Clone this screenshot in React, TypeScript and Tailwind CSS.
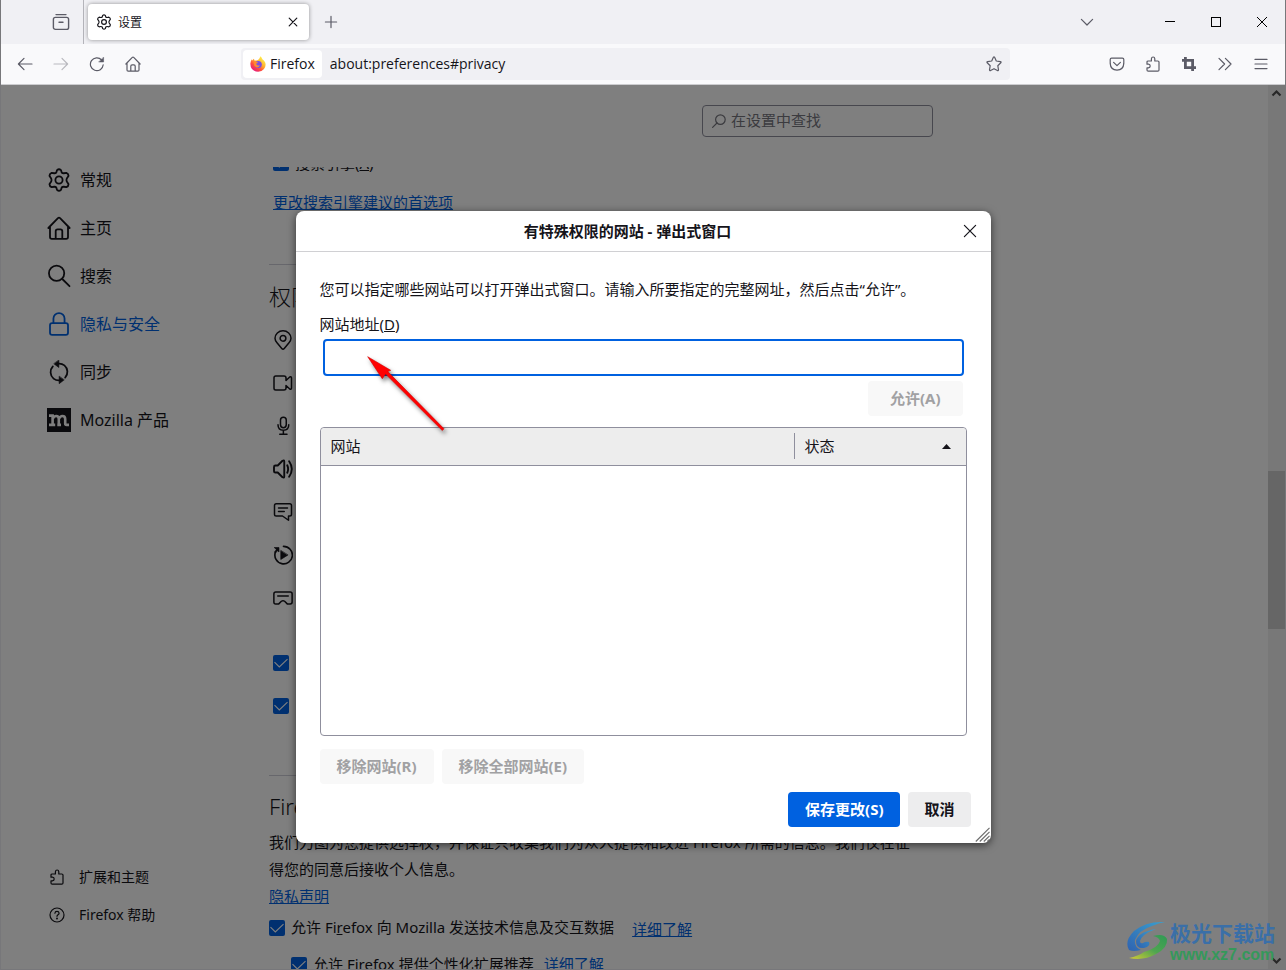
import React from "react";

type IconProps = { className?: string };

const stroke = {
  fill: "none",
  stroke: "currentColor",
  strokeWidth: 1.2,
  strokeLinecap: "round" as const,
  strokeLinejoin: "round" as const,
};

function Svg({ className = "size-4", children }: IconProps & { children: React.ReactNode }) {
  return (
    <svg viewBox="0 0 16 16" className={`${className} shrink-0`} aria-hidden="true" {...stroke}>
      {children}
    </svg>
  );
}

const GearIcon = (p: IconProps) => (
  <Svg {...p}>
    <circle cx="8" cy="8" r="2.4" />
    <path d="M6.7 1.4Q8 .2 9.3 1.4L9.8 3Q10.4 3.6 11.2 3.5L12.9 3.2Q14.5 3.8 14.3 5.4L13.2 7Q12.8 8 13.2 9L14.3 10.6Q14.5 12.2 12.9 12.8L11.2 12.5Q10.4 12.4 9.8 13L9.3 14.6Q8 15.8 6.7 14.6L6.2 13Q5.6 12.4 4.8 12.5L3.1 12.8Q1.5 12.2 1.7 10.6L2.8 9Q3.2 8 2.8 7L1.7 5.4Q1.5 3.8 3.1 3.2L4.8 3.5Q5.6 3.6 6.2 3Z" />
  </Svg>
);
const HomeIcon = (p: IconProps) => (
  <Svg {...p}>
    <path d="M.9 8 7.3 1.4Q8 .8 8.7 1.4L15.1 8M2 7.2V14Q2 15.2 3.2 15.2H12.8Q14 15.2 14 14V7.2M5.8 15V10.2Q5.8 8.9 7.1 8.9H8.9Q10.2 8.9 10.2 10.2V15" />
  </Svg>
);
const SearchIcon = (p: IconProps) => (
  <Svg {...p}>
    <circle cx="6.4" cy="6.2" r="5.1" />
    <path d="M10.2 10 15 14.8" />
  </Svg>
);
const LockIcon = (p: IconProps) => (
  <Svg {...p}>
    <rect x="2" y="7.4" width="12" height="7.8" rx="1.4" />
    <path d="M4.3 7.3V4.4a3.7 3.7 0 0 1 7.4 0V7.3" />
  </Svg>
);
const SyncIcon = (p: IconProps) => (
  <Svg {...p}>
    <path d="M4.4 12.4A5.6 5.6 0 0 1 3.9 4.3M7.4 2.5A5.6 5.6 0 0 1 11.6 3.6M11.6 3.6A5.6 5.6 0 0 1 12.1 11.7M8.6 13.5A5.6 5.6 0 0 1 4.4 12.4" />
    <path d="M7.9.2V5L4.7 2.6ZM8.1 11V15.8L11.3 13.4Z" fill="currentColor" strokeWidth=".4" />
  </Svg>
);
const PuzzleIcon = (p: IconProps) => (
  <Svg {...p}>
    <path d="M3.2 15.2Q2 15.2 2 14V11.8H3.4Q5.2 11.6 5.2 10T3.4 8.2H2V6.1Q2 5 3.2 5H6.4V2.8Q6.6 1 8.1 1T9.8 2.8V5H12.8Q14 5 14 6.1V14Q14 15.2 12.8 15.2Z" />
  </Svg>
);
const HelpIcon = (p: IconProps) => (
  <Svg {...p}>
    <circle cx="8" cy="8" r="7" />
    <path d="M5.9 6.2Q6.1 4.3 8 4.3T10.1 6.2Q10.1 7.2 8.8 7.9 8 8.4 8 9.3" />
    <circle cx="8" cy="11.6" r=".4" fill="currentColor" />
  </Svg>
);
const PinIcon = (p: IconProps) => (
  <Svg {...p}>
    <circle cx="8" cy="6.6" r="2.3" />
    <path d="M8 15.4Q7.5 15.4 7 14.8L3.2 10.2Q1.6 8.4 1.6 6.6A6.4 6 0 0 1 14.4 6.6Q14.4 8.4 12.8 10.2L9 14.8Q8.5 15.4 8 15.4Z" />
  </Svg>
);
const CameraIcon = (p: IconProps) => (
  <Svg {...p}>
    <path d="M2.2 2.4H8.8Q10.4 2.4 10.4 4V6L13.4 3.2Q14.8 2.6 14.8 4V12Q14.8 13.4 13.4 12.8L10.4 10V12Q10.4 13.6 8.8 13.6H2.2Q.8 13.6.8 12.2V3.8Q.8 2.4 2.2 2.4Z" />
  </Svg>
);
const MicIcon = (p: IconProps) => (
  <Svg {...p}>
    <rect x="6" y=".9" width="4.6" height="8.4" rx="2.3" />
    <path d="M4 7Q4 11.4 8.3 11.4T12.6 7M8.3 11.6V14.6M5.4 14.6H11.2" />
  </Svg>
);
const SpeakerIcon = (p: IconProps) => (
  <Svg {...p}>
    <path d="M.8 6.3Q.8 5.2 1.9 5.2H3.8L7.6 1.4Q9 .6 9 2V14Q9 15.4 7.6 14.6L3.8 10.8H1.9Q.8 10.8.8 9.7ZM11.4 5Q12.8 8 11.4 11M12.9 1.8Q17.2 8 12.9 14.2" strokeWidth="1.5" />
  </Svg>
);
const BubbleIcon = (p: IconProps) => (
  <Svg {...p}>
    <path d="M2.6 1.4H13.4Q14.8 1.4 14.8 2.8V9.8Q14.8 11.2 13.4 11.2H12.4V14.6L7.6 11.2H2.6Q1.2 11.2 1.2 9.8V2.8Q1.2 1.4 2.6 1.4ZM4.4 4.8H11.6M4.4 7.6H9" />
  </Svg>
);
const AutoplayIcon = (p: IconProps) => (
  <Svg {...p}>
    <path d="M8.4 1.1A7 7 0 1 1 1.9 5.8" strokeWidth="1.3" />
    <path d="M6.2 4.6V11.6L11.8 8.1ZM1.2 2H4.8V5.6L3.6 4.6 2 6.4 1.2 5.6 2.6 3.8Z" fill="currentColor" strokeWidth=".5" />
  </Svg>
);
const HeadsetIcon = (p: IconProps) => (
  <Svg {...p}>
    <path d="M2.2 3.2H13.8Q15.3 3.2 15.3 4.7V11.2Q15.3 12.7 13.8 12.7H11.4L9.3 10.6Q8 9.7 6.7 10.6L4.6 12.7H2.2Q.7 12.7.7 11.2V4.7Q.7 3.2 2.2 3.2ZM3.8 6.3H12.2" />
  </Svg>
);

function MozillaIcon() {
  return (
    <svg viewBox="0 0 24 24" className="size-6 shrink-0" aria-hidden="true">
      <rect width="24" height="24" fill="#15141a" />
      <path
        d="M2 7.600H5.600V16.900M2 16.900H8.200M5.600 10.800Q7 8 9.200 8 11.800 8 11.800 11V16.900M10.300 16.900H14M11.800 10.800Q13.200 8 15.400 8 18.200 8 18.200 11V15.600Q18.200 16.900 19.500 16.900H22"
        fill="none"
        stroke="#fff"
        strokeWidth="2.6"
      />
    </svg>
  );
}

function FirefoxLogo() {
  return (
    <svg viewBox="0 0 16 16" className="size-4 shrink-0" aria-hidden="true">
      <defs>
        <linearGradient id="fx-body" x1=".85" y1=".1" x2=".2" y2=".95">
          <stop offset="0" stopColor="#fff44f" />
          <stop offset=".4" stopColor="#ffb02e" />
          <stop offset=".68" stopColor="#ff4f3d" />
          <stop offset="1" stopColor="#e31587" />
        </linearGradient>
      </defs>
      <path d="M10.3.2Q11.8 1.2 12.4 3.2 14.4 4.4 15.3 6.8 16.3 10.2 14 13 11.8 15.7 8.2 15.8 4.3 15.8 2 13 .1 10.6.4 7.2.7 4.8 1.9 3.2L2.3 4.6Q3 3.4 4 2.7L4.4 4.4 6.4 4.6Q8.2 4.2 9 3 9.8 1.7 10.3.2Z" fill="url(#fx-body)" />
      <circle cx="8.3" cy="8.4" r="3.5" fill="#7b4fe0" />
      <path d="M3.6 6.4Q5.8 5 8 6.4 7.4 7.4 6.2 7.6 6.2 9 7.8 9.4 9 9.6 9.8 8.8 9.4 11.4 7 11.4 4 11 3.6 6.4Z" fill="#ff8a2f" />
    </svg>
  );
}

const categories = [
  { label: "常规", icon: <GearIcon className="size-6" /> },
  { label: "主页", icon: <HomeIcon className="size-6" /> },
  { label: "搜索", icon: <SearchIcon className="size-6" /> },
  { label: "隐私与安全", icon: <LockIcon className="size-6" />, active: true },
  { label: "同步", icon: <SyncIcon className="size-6" /> },
  { label: "Mozilla 产品", icon: <MozillaIcon /> },
];

const permissionIcons = [PinIcon, CameraIcon, MicIcon, SpeakerIcon, BubbleIcon, AutoplayIcon, HeadsetIcon];

function Checkbox({ id, label }: { id: string; label?: string }) {
  return (
    <span className="relative flex size-4 shrink-0">
      <input
        id={id}
        type="checkbox"
        defaultChecked
        aria-label={label}
        className="size-4 appearance-none rounded-xs bg-[#0061e0]"
      />
      <svg viewBox="0 0 16 16" className="pointer-events-none absolute inset-0 size-4" aria-hidden="true">
        <path d="M1.5 7.2 6.3 12 14.5 4.2" fill="none" stroke="#fff" strokeWidth="1.1" />
      </svg>
    </span>
  );
}

function TabStrip() {
  return (
    <div className="flex h-11 shrink-0 items-center bg-[#f0f0f4] text-[#5b5b66]">
      <div className="flex h-full w-[83px] items-center justify-end border-r border-[#b4b4ba] pr-3">
        <button aria-label="查看" className="flex size-5 items-center justify-center">
          <svg viewBox="0 0 18 18" className="size-[18px]" aria-hidden="true" {...stroke} strokeWidth="1.4">
            <path d="M4 1.6H14" />
            <rect x="1.4" y="4.4" width="15.2" height="12" rx="2" />
            <path d="M7 9.2H11" />
          </svg>
        </button>
      </div>
      <div className="ml-1 flex h-9 w-[221px] items-center rounded bg-white px-2 text-xs text-[#15141a] shadow-[0_0_4px_rgba(0,0,0,0.4)]">
        <GearIcon />
        <span className="ml-1.5 flex-1 pt-0.5">设置</span>
        <button aria-label="关闭标签页" className="flex size-4 items-center justify-center">
          <svg viewBox="0 0 16 16" className="size-4" aria-hidden="true" {...stroke}>
            <path d="M4.2 4.2 11.8 11.8M11.8 4.2 4.2 11.8" />
          </svg>
        </button>
      </div>
      <button aria-label="新标签页" className="ml-3 flex size-5 items-center justify-center">
        <svg viewBox="0 0 16 16" className="size-4" aria-hidden="true" {...stroke}>
          <path d="M8 2.4V13.6M2.4 8H13.6" />
        </svg>
      </button>
      <div className="flex-1" />
      <button aria-label="列出标签页" className="flex w-[60px] justify-center">
        <svg viewBox="0 0 16 16" className="size-4" aria-hidden="true" {...stroke}>
          <path d="M2.4 5.4 8 11 13.6 5.4" />
        </svg>
      </button>
      <div className="ml-[30px] flex text-black">
        <button aria-label="最小化" className="flex w-[46px] justify-center">
          <svg viewBox="0 0 12 12" className="size-3" aria-hidden="true"><path d="M1 5.5H11" stroke="currentColor" /></svg>
        </button>
        <button aria-label="最大化" className="flex w-[46px] justify-center">
          <svg viewBox="0 0 12 12" className="size-3" aria-hidden="true"><rect x="1.5" y="1.5" width="9" height="9" fill="none" stroke="currentColor" /></svg>
        </button>
        <button aria-label="关闭" className="flex w-[46px] justify-center">
          <svg viewBox="0 0 12 12" className="size-3" aria-hidden="true"><path d="M1 1 11 11M11 1 1 11" stroke="currentColor" /></svg>
        </button>
      </div>
    </div>
  );
}

function NavBar() {
  return (
    <div className="flex h-[41px] shrink-0 items-center border-b border-[#cccccf] bg-[#f9f9fb] text-[#5b5b66]">
      <div className="flex w-[240px] items-center gap-5 pl-4">
        <button aria-label="后退"><Svg><path d="M15 8H1.4M7 2.4 1.4 8 7 13.6" /></Svg></button>
        <button aria-label="前进" className="opacity-40"><Svg><path d="M1 8H14.6M9 2.4 14.6 8 9 13.6" /></Svg></button>
        <button aria-label="刷新">
          <Svg>
            <path d="M14.2 8.8A6.4 6.4 0 1 1 12.6 4" />
            <path d="M14.6 1.4V6H10Z" fill="currentColor" strokeWidth=".5" />
          </Svg>
        </button>
        <button aria-label="主页"><HomeIcon /></button>
      </div>
      <div className="flex h-8 min-w-0 flex-1 items-center rounded bg-[#f0f0f4] pr-2 pl-0.5 font-['Open_Sans',sans-serif] text-sm text-[#15141a]">
        <span className="flex h-7 items-center gap-1 rounded bg-white px-[7px] whitespace-nowrap">
          <FirefoxLogo />
          Firefox
        </span>
        <input aria-label="地址" defaultValue="about:preferences#privacy" className="ml-2 min-w-0 flex-1 bg-transparent outline-none" />
        <button aria-label="收藏" className="text-[#5b5b66]">
          <Svg>
            <path d="M7.4 1.3Q8 .3 8.6 1.3L10.3 5 14.4 5.6Q15.5 5.9 14.8 6.8L11.8 9.7 12.5 13.8Q12.5 14.9 11.4 14.6L8 12.7 4.6 14.6Q3.5 14.9 3.5 13.8L4.2 9.7 1.2 6.8Q.5 5.9 1.6 5.6L5.7 5Z" />
          </Svg>
        </button>
      </div>
      <div className="flex w-[275px] items-center justify-end gap-5 pr-4">
        <button aria-label="Pocket"><Svg><path d="M2.6 2.2H13.4Q14.8 2.2 14.8 3.6V7.4Q14.4 14 8 14.2 1.6 14 1.2 7.4V3.6Q1.2 2.2 2.6 2.2ZM4.6 6.4 8 9.6 11.4 6.4" /></Svg></button>
        <button aria-label="扩展"><PuzzleIcon /></button>
        <button aria-label="截图">
          <Svg><path d="M4.4 1V11.6H15M1 4.4H11.6V15" strokeWidth="2.8" strokeLinecap="butt" strokeLinejoin="miter" /></Svg>
        </button>
        <button aria-label="更多工具"><Svg><path d="M2 2.4 7.6 8 2 13.6M8.4 2.4 14 8 8.4 13.6" /></Svg></button>
        <button aria-label="菜单"><Svg><path d="M2 3.4H14M2 8H14M2 12.6H14" /></Svg></button>
      </div>
    </div>
  );
}

function Sidebar() {
  return (
    <nav className="flex w-[268px] shrink-0 flex-col justify-between pt-[71px] pb-[35px] pl-[46px]">
      <ul>
        {categories.map((c) => (
          <li key={c.label}>
            <a href="#" className={c.active ? "flex h-12 items-center gap-[9px] text-base text-[#0061e0]" : "flex h-12 items-center gap-[9px] text-base"}>
              {c.icon}
              {c.label}
            </a>
          </li>
        ))}
      </ul>
      <ul className="text-sm">
        <li><a href="#" className="flex h-[38px] items-center gap-3.5 pl-0.5"><PuzzleIcon />扩展和主题</a></li>
        <li><a href="#" className="flex h-[38px] items-center gap-3.5 pl-0.5"><HelpIcon />Firefox 帮助</a></li>
      </ul>
    </nav>
  );
}

function Preferences() {
  return (
    <main className="flex w-[664px] shrink-0 flex-col overflow-hidden">
      <div className="flex h-[82px] shrink-0 justify-end pt-5">
        <div className="flex h-8 w-[231px] items-center gap-1 rounded border border-[#8f8f9d] px-2 text-[#76767e]">
          <Svg><circle cx="9.4" cy="6.6" r="4.8" /><path d="M6 10 1.6 14.4" /></Svg>
          <input aria-label="在设置中查找" placeholder="在设置中查找" className="min-w-0 flex-1 bg-transparent pb-0.5 outline-none placeholder:text-[#76767e]" />
        </div>
      </div>
      <div className="flex min-h-0 flex-1 flex-col justify-start overflow-hidden">
        <div className="-mt-[23px] flex h-[38px] shrink-0 items-center gap-1.5 pl-1 leading-5">
          <Checkbox id="suggest-engine" />
          <label htmlFor="suggest-engine">搜索引擎(<u>A</u>)</label>
        </div>
        <div className="mt-[10px] shrink-0 pl-1 leading-5"><a href="#" className="text-[#0061e0] underline">更改搜索引擎建议的首选项</a></div>
        <hr className="mt-[52px] shrink-0 border-[#cfcfd8]" />
        <h2 className="mt-[15px] shrink-0 text-[22px] leading-8 font-light">权限</h2>
        <ul className="mt-1.5 shrink-0 pl-1">
          {permissionIcons.map((Icon, i) => (
            <li key={i} className="flex h-[43px] items-center"><Icon className="size-5" /></li>
          ))}
        </ul>
        <div className="mt-[22px] shrink-0 pl-1">
          <div className="flex h-[43px] items-center"><Checkbox id="block-popups" label="阻止弹出式窗口" /></div>
          <div className="flex h-[43px] items-center"><Checkbox id="warn-addons" label="安装附加组件时警告" /></div>
        </div>
        <hr className="mt-12 shrink-0 border-[#cfcfd8]" />
        <h2 className="mt-3.5 shrink-0 text-[22px] leading-8 font-light">Firefox</h2>
        <p className="mt-[7px] shrink-0 pr-3 leading-[27px]">
          我们力图为您提供选择权，并保证只收集我们为众人提供和改进 Firefox 所需的信息。我们仅在征得您的同意后接收个人信息。
        </p>
        <div className="shrink-0 leading-[27px]"><a href="#" className="text-[#0061e0] underline">隐私声明</a></div>
        <div className="-mt-px flex h-[37px] shrink-0 items-center gap-1.5">
          <Checkbox id="telemetry" />
          <label htmlFor="telemetry">允许 Fi<u>r</u>efox 向 Mozilla 发送技术信息及交互数据</label>
          <a href="#" className="mt-1 ml-3 text-[#0061e0] underline">详细了解</a>
        </div>
        <div className="flex h-[37px] shrink-0 items-center gap-1.5 pl-[22px]">
          <Checkbox id="recommend" />
          <label htmlFor="recommend">允许 Firefox 提供个性化扩展推荐</label>
          <a href="#" className="ml-1 text-[#0061e0] underline">详细了解</a>
        </div>
      </div>
    </main>
  );
}

function ScrollBar() {
  return (
    <div className="ml-auto flex w-[17px] shrink-0 flex-col items-center bg-[#f0f0f0] text-[#505050]">
      <svg viewBox="0 0 17 17" className="size-[17px] shrink-0" aria-hidden="true"><path d="M4.5 10.5 8.5 6.5 12.5 10.5" fill="none" stroke="currentColor" strokeWidth="2.2" /></svg>
      <div className="flex-[369]" />
      <div className="w-full flex-[158] bg-[#cdcdcd]" />
      <div className="flex-[323]" />
      <svg viewBox="0 0 17 17" className="size-[17px] shrink-0" aria-hidden="true"><path d="M4.5 6.5 8.5 10.5 12.5 6.5" fill="none" stroke="currentColor" strokeWidth="2.2" /></svg>
    </div>
  );
}

function PermissionsDialog() {
  return (
    <div role="dialog" aria-labelledby="dialog-title" className="relative flex w-[695px] flex-col rounded-lg bg-white shadow-[0_2px_8px_rgba(0,0,0,0.6)]">
      <div className="flex h-[41px] items-center border-b border-[#d0d0d3] pr-[11px]">
        <h1 id="dialog-title" className="flex-1 text-center font-bold">有特殊权限的网站 - 弹出式窗口</h1>
        <button aria-label="关闭对话框" className="flex size-5 items-center justify-center">
          <svg viewBox="0 0 16 16" className="size-4" aria-hidden="true" {...stroke}><path d="M2.4 2.4 13.6 13.6M13.6 2.4 2.4 13.6" /></svg>
        </button>
      </div>
      <div className="flex flex-col px-6 pt-[25px]">
        <p className="leading-6">您可以指定哪些网站可以打开弹出式窗口。请输入所要指定的完整网址，然后点击“允许”。</p>
        <label htmlFor="site-url" className="mt-[11px] leading-6">网站地址(<u>D</u>)</label>
        <input id="site-url" className="mx-[3px] mt-[3px] h-[37px] rounded border-2 border-[#0061e0] px-2 outline-none" />
        <button disabled className="mt-[5px] mr-1 h-[35px] self-end rounded bg-[#f8f8f8] px-[22px] font-bold text-[#a1a1a3]">允许(A)</button>
        <div className="mt-[11px] h-[309px] rounded border border-[#8f8f9d]">
          <table className="w-full table-fixed">
            <thead>
              <tr className="h-[37px] border-b border-[#8f8f9d] bg-[#ededed] text-left">
                <th className="rounded-tl p-0 pl-[10px] font-normal">网站</th>
                <th className="w-[172px] rounded-tr p-0 font-normal">
                  <span className="flex h-[26px] items-center justify-between border-l border-[#8f8f9d] pr-[15px] pl-[10px]">
                    状态
                    <svg viewBox="0 0 9 5" className="h-[5px] w-[9px]" aria-hidden="true"><path d="M0 5 4.5 0 9 5Z" fill="#15141a" /></svg>
                  </span>
                </th>
              </tr>
            </thead>
          </table>
        </div>
        <div className="mt-[13px] flex gap-2 font-bold text-[#a1a1a3]">
          <button disabled className="h-[35px] rounded bg-[#f8f8f8] px-[17px]">移除网站(R)</button>
          <button disabled className="h-[35px] rounded bg-[#f8f8f8] px-[17px]">移除全部网站(E)</button>
        </div>
      </div>
      <div className="mt-2 flex justify-end gap-2 pr-5 pb-4 font-bold">
        <button className="h-[35px] rounded bg-[#0061e0] px-[17px] text-white">保存更改(S)</button>
        <button className="h-[35px] rounded bg-[#ededee] px-4">取消</button>
      </div>
      <svg viewBox="0 0 16 16" className="absolute right-0 bottom-0 size-4" aria-hidden="true">
        <path d="M.8 14.5 14.5.8M4.8 14.5 14.5 4.8M8.8 14.5 14.5 8.8M12.3 14.5 14.5 12.3" stroke="#6f6f6f" strokeWidth="1.2" fill="none" />
      </svg>
      <svg viewBox="0 0 90 90" className="pointer-events-none absolute top-[140px] left-[66px] size-[90px] drop-shadow-[2px_3px_2px_rgba(0,0,0,0.5)]" aria-hidden="true">
        <path d="M5.7 5.7 28.7 19.3 25.8 20.6 82 77.8 80.3 79.6 23.6 23.1 20.3 27.7Z" fill="#f00" stroke="#d40000" strokeWidth=".6" />
      </svg>
    </div>
  );
}

function Watermark() {
  return (
    <div className="pointer-events-none absolute right-2.5 bottom-1.5 flex items-center">
      <svg viewBox="0 0 42 40" className="mr-0.5 h-10 w-[42px]" aria-hidden="true">
        <defs>
          <linearGradient id="wm-blue" x1="1" y1="0" x2="0" y2="1">
            <stop offset="0" stopColor="#3aa0cf" />
            <stop offset="1" stopColor="#2f62b0" />
          </linearGradient>
          <linearGradient id="wm-green" x1="1" y1="0" x2="0" y2="1">
            <stop offset="0" stopColor="#2f9a55" />
            <stop offset=".5" stopColor="#4fa550" />
            <stop offset="1" stopColor="#d5cc32" />
          </linearGradient>
        </defs>
        <path d="M39 1Q20 0 8 10-2 20 3 29 7 31 15 29 8 26 9 19 13 9 26 5 33 2 39 1Z" fill="url(#wm-blue)" />
        <path d="M30 8Q12 11 10 20 10 28 18 27 25 25 23 21 20 20 17 22 14 23 14 20 16 13 30 8Z" fill="url(#wm-blue)" />
        <path d="M27 15Q38 12 41 18 42 27 30 33 18 40 3 37 12 35 18 31 32 27 34 20 33 16 27 15Z" fill="url(#wm-green)" />
      </svg>
      <div className="flex flex-col">
        <span className="text-[21px] leading-7 font-bold text-[#3a6fa8]">极光下载站</span>
        <span className="font-['Liberation_Sans',sans-serif] text-base leading-4 font-bold text-[#35985a]">www.xz7.com</span>
      </div>
    </div>
  );
}

export default function App() {
  return (
    <div className="flex h-screen flex-col overflow-hidden border-x border-b border-[#77777a] bg-white font-['Noto_Sans','Noto_Sans_CJK_SC',sans-serif] text-[15px] text-[#15141a]">
      <TabStrip />
      <NavBar />
      <div className="relative flex min-h-0 flex-1">
        <Sidebar />
        <Preferences />
        <ScrollBar />
        <div className="absolute inset-0 flex items-center justify-center bg-black/50">
          <PermissionsDialog />
        </div>
        <Watermark />
      </div>
    </div>
  );
}
